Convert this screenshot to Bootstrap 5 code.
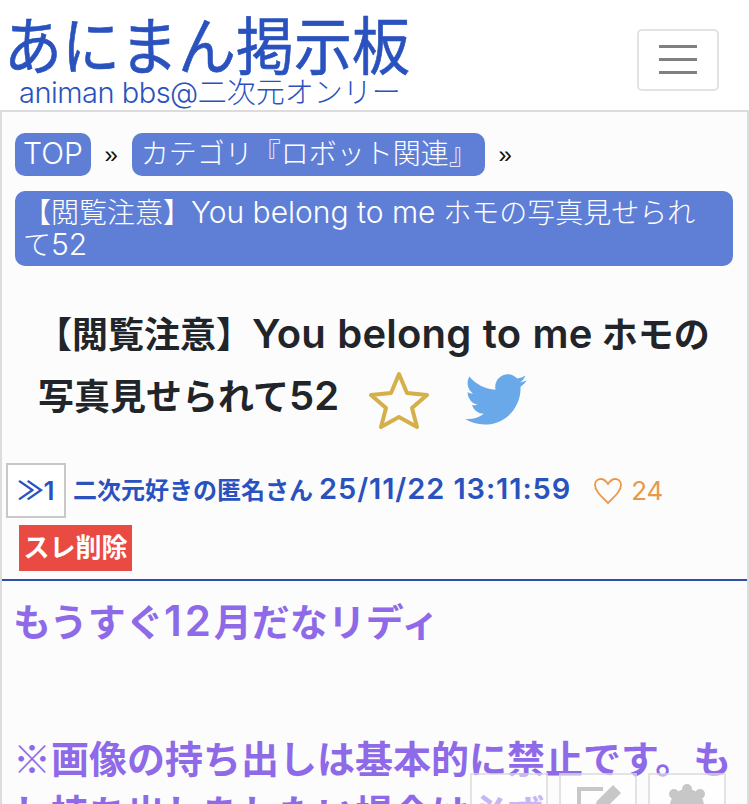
<!DOCTYPE html>
<html lang="ja">
<head>
<meta charset="UTF-8">
<title>あにまん掲示板</title>
<link href="https://cdn.jsdelivr.net/npm/bootstrap@5.3.0/dist/css/bootstrap.min.css" rel="stylesheet">
<style>
html, body { height: 804px; overflow: hidden; }
body { font-family: "Inter", "Noto Sans CJK JP", sans-serif; color: #212529; background: #fff; }
.lat { line-height: 1; }
.site-head { height: 110px; padding: 0 30px 0 4px; }
.site-logo { color: #2a52be; text-decoration: none; display: block; }
.logo-main { font-size: 58px; font-weight: 400; -webkit-text-stroke: .6px #2a52be; line-height: 60px; padding-top: 16px; white-space: nowrap; transform: scaleY(1.08); transform-origin: bottom; }
.logo-sub { font-size: 29px; line-height: 30px; margin-top: -1px; padding-left: 15px; white-space: nowrap; font-weight: 300; }
.logo-lat { letter-spacing: -.5px; }
.menu-btn { width: 82px; height: 62px; border: 2px solid #e3e3e3; border-radius: 5px; background: transparent; margin-top: 9px; gap: 10px; }
.menu-btn span { display: block; width: 38px; height: 3px; background: #808080; }
.thread-box { border: 2px solid #dcdcdc; border-bottom: 0; background: #fcfcfd; height: 694px; overflow: hidden; }
.crumbs { padding: 21px 14px 0 13px; }
.crumb-link { background: #5f7fd7; color: #fff; border-radius: 10px; font-size: 28px; font-weight: 300; line-height: 37px; padding: 3px 8px; text-decoration: none; display: block; }
.crumb-cat { width: 353px; white-space: nowrap; padding-left: 9px; }
.crumb-sep { font-family: "Liberation Sans", sans-serif; font-size: 24px; width: 41px; text-align: center; color: #111; }
.crumb-long { margin-top: 15px; padding: 6px 16px 5px 8px; line-height: 32px; }
.crumb-link .lat { font-size: 30px; }
.thread-title { font-size: 36px; font-weight: 600; line-height: 62px; margin: 38px 20px 0 36px; text-indent: -2px; }
.thread-title .lat { font-size: 40px; letter-spacing: .2px; word-spacing: 1px; }
.thread-title svg { vertical-align: middle; }
.star-icon { margin: 0 36px 0 30px; }
.post-meta { margin-top: 34px; padding-left: 4px; color: #2a52be; font-size: 24px; font-weight: 600; }
.post-meta .lat { font-size: 29px; letter-spacing: .9px; }
.post-meta .post-num .lat { font-size: 26px; letter-spacing: 0; }
.post-num { width: 60px; height: 55px; border: 2px solid #c8c8c8; background: #fff; }
.post-info { margin-left: 7px; white-space: nowrap; }
.like-box { color: #e8984a; font-weight: 400; margin-left: 22px; font-size: 26px; }
.del-btn { background: #e94a42; color: #fff; font-size: 26px; font-weight: 600; line-height: 46px; width: 113px; text-align: center; margin: 7px 0 0 17px; }
.post-line { border-top: 2px solid #2d4fa8; margin-top: 8px; }
.post-body { color: #8f6ae8; font-size: 38px; font-weight: 600; line-height: 54px; padding: 14px 14px 0 11px; }
.post-body .lat { font-size: 42px; letter-spacing: 3px; }
.post-body .cjk { font-family: "Noto Sans CJK JP", sans-serif; }
.post-gap { height: 81px; }
.float-bar { position: fixed; left: 470px; top: 773px; gap: 11px; }
.float-btn { width: 78px; height: 64px; border: 2px solid rgba(200,200,200,.5); background: rgba(255,255,255,.5); }
.float-btn svg { opacity: .4; }
</style>
</head>
<body>
<header class="site-head d-flex justify-content-between align-items-center">
  <a class="site-logo" href="#">
    <div class="logo-main">あにまん掲示板</div>
    <div class="logo-sub"><span class="logo-lat">animan bbs@</span>二次元オンリー</div>
  </a>
  <button class="menu-btn d-flex flex-column align-items-center justify-content-center" type="button" aria-label="menu">
    <span></span><span></span><span></span>
  </button>
</header>

<main class="thread-box">
  <nav class="crumbs">
    <div class="d-flex align-items-center">
      <a class="crumb-link" href="#"><span class="lat">TOP</span></a>
      <span class="crumb-sep">»</span>
      <a class="crumb-link crumb-cat" href="#">カテゴリ『ロボット関連』</a>
      <span class="crumb-sep">»</span>
    </div>
    <a class="crumb-link crumb-long" href="#">【閲覧注意】<span class="lat">You belong to me</span> ホモの写真見せられて<span class="lat">52</span></a>
  </nav>

  <h1 class="thread-title">【閲覧注意】<span class="lat">You belong to me</span> ホモの写真見せられて<span class="lat">52</span><svg class="star-icon" width="60" height="58" viewBox="0 0 60 58"><path d="M30 3l8 19 20 2-15 13 5 19-18-10-18 10 5-19L2 24l20-2z" fill="none" stroke="#d4af4a" stroke-width="4" stroke-linejoin="round"/></svg><svg width="62" height="52" viewBox="0 0 24 20"><path fill="#6aa9e9" d="M24 2.4c-.9.4-1.8.7-2.8.8 1-.6 1.8-1.6 2.2-2.7-1 .6-2 1-3.1 1.2C19.300.7 18 0 16.600 0c-2.700 0-4.900 2.200-4.900 4.900 0 .4 0 .8.1 1.100C7.700 5.800 4.100 3.800 1.700.9c-.4.700-.7 1.600-.7 2.500 0 1.700.9 3.200 2.200 4.100-.8 0-1.600-.2-2.200-.6v.1c0 2.400 1.700 4.400 3.900 4.800-.4.100-.8.200-1.300.2-.3 0-.6 0-.9-.1.600 2 2.400 3.400 4.600 3.400-1.700 1.300-3.800 2.100-6.100 2.100-.4 0-.8 0-1.200-.1 2.200 1.400 4.800 2.200 7.500 2.200 9.100 0 14-7.500 14-14v-.6c1-.7 1.800-1.600 2.500-2.500z"/></svg></h1>

  <div class="post-meta d-flex align-items-center">
    <div class="post-num d-flex align-items-center justify-content-center"><span class="lat">≫1</span></div>
    <span class="post-info">二次元好きの匿名さん <span class="lat">25/11/22 13:11:59</span></span>
    <span class="like-box d-flex align-items-center gap-2"><svg width="30" height="28" viewBox="0 0 30 28"><path d="M15 26C8 19 2 14 2 8c0-4 3-6 6-6 3 0 5 2 7 5 2-3 4-5 7-5 3 0 6 2 6 6 0 6-6 11-13 18z" fill="none" stroke="#e8984a" stroke-width="1.800"/></svg>24</span>
  </div>
  <div class="del-btn">スレ削除</div>
  <div class="post-line"></div>
  <div class="post-body">
    <div>もうすぐ<span class="lat">12</span>月だなリディ</div>
    <div class="post-gap"></div>
    <div><span class="cjk">※</span>画像の持ち出しは基本的に禁止です。もし持ち出しをしたい場合は必ず</div>
  </div>
</main>

<div class="float-bar d-flex">
  <div class="float-btn"></div>
  <div class="float-btn d-flex justify-content-center pt-2"><svg width="50" height="46" viewBox="0 0 50 46"><path d="M30 6H6v36h30V24" fill="none" stroke="#777" stroke-width="4"/><path d="M20 28l4-10L40 2l8 8-16 16z" fill="#777"/></svg></div>
  <div class="float-btn d-flex justify-content-center pt-2"><svg width="50" height="46" viewBox="0 0 50 46"><circle cx="25" cy="23" r="17" fill="#777"/><circle cx="25" cy="6" r="5" fill="#777"/><circle cx="12" cy="11" r="5" fill="#777"/><circle cx="38" cy="11" r="5" fill="#777"/></svg></div>
</div>
<script src="https://cdn.jsdelivr.net/npm/bootstrap@5.3.0/dist/js/bootstrap.bundle.min.js"></script>
</body>
</html>
